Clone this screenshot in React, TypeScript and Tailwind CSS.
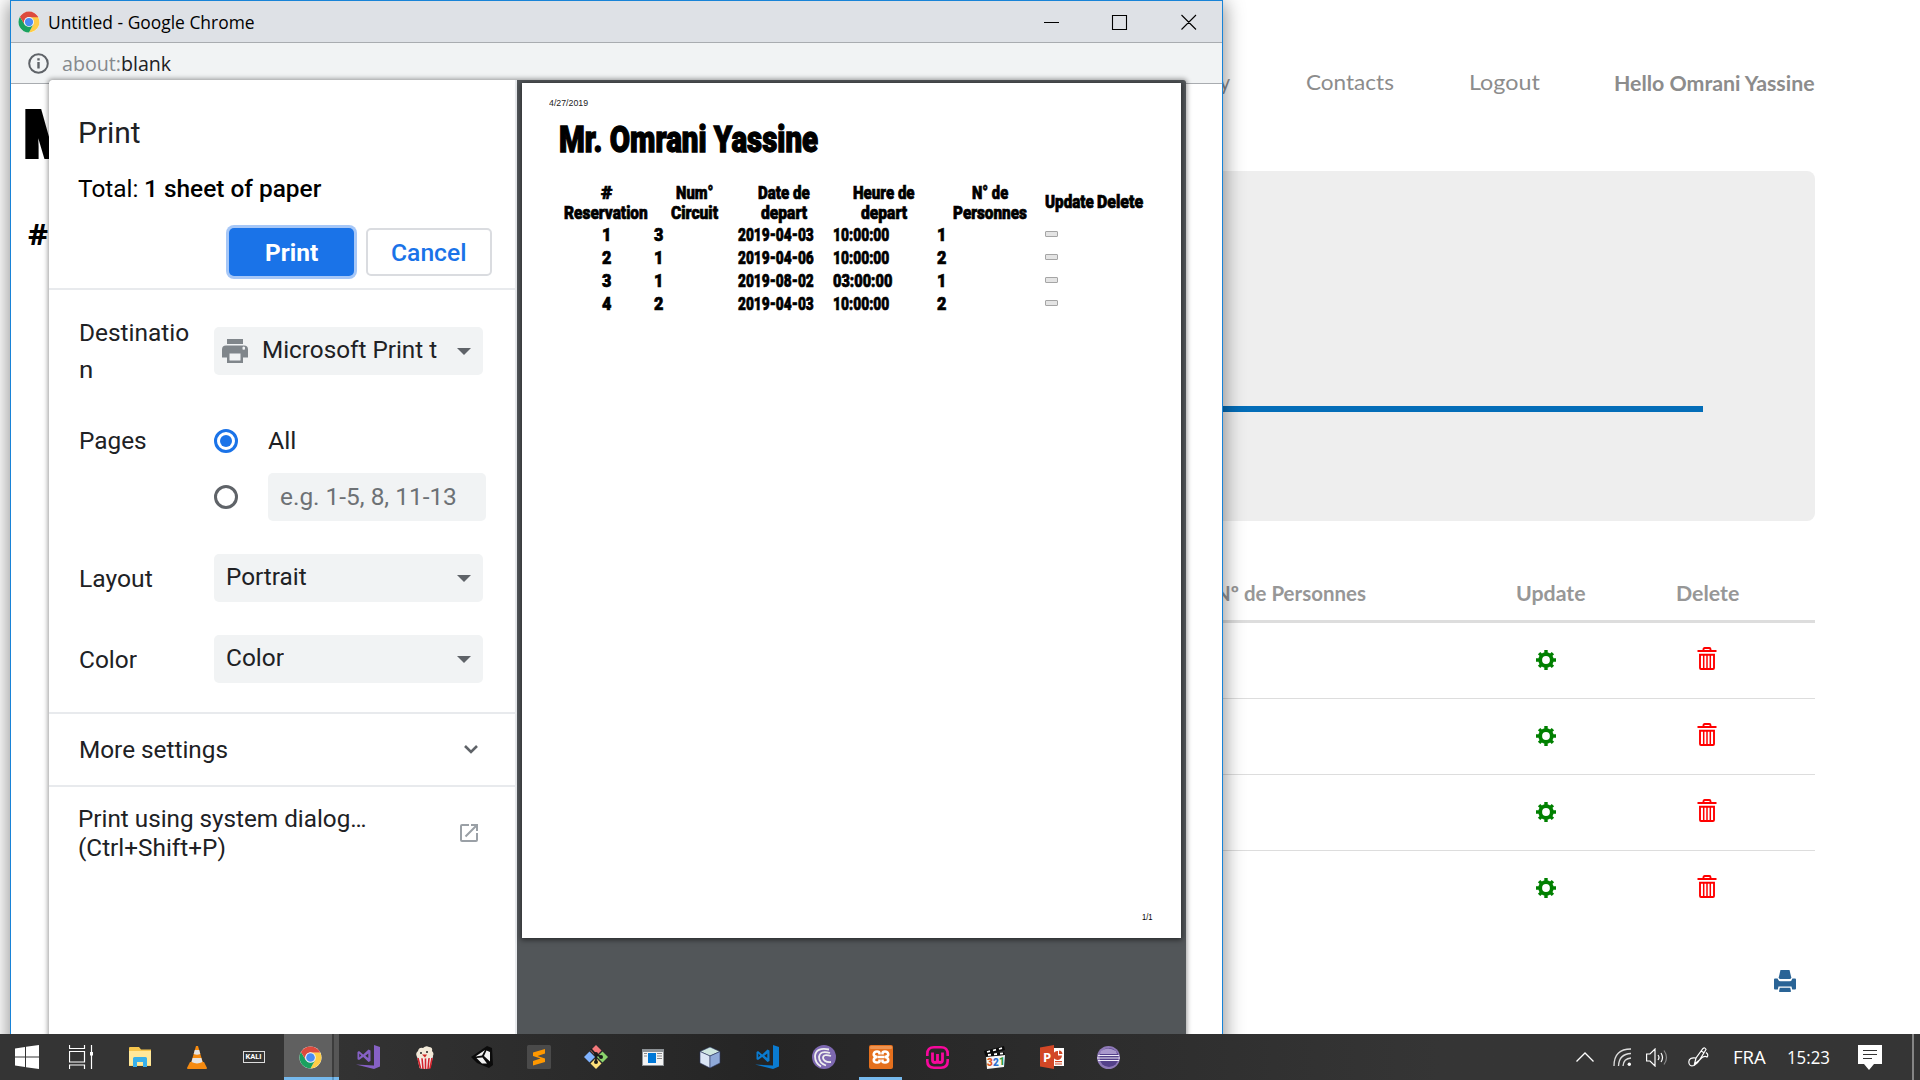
import { useLayoutEffect, useRef, type ReactNode } from "react";

const sans = "font-['Roboto',sans-serif]";
const segoe = "font-['Open_Sans',sans-serif]";
const heavy = "font-['Roboto',sans-serif] font-black";

/** A single line of text squeezed or stretched to a given width. */
function Fit({ w, className = "", children }: { w: number; className?: string; children: ReactNode }) {
  const ref = useRef<HTMLSpanElement>(null);
  useLayoutEffect(() => {
    const el = ref.current;
    if (el) el.style.transform = `scaleX(${w / el.offsetWidth})`;
  }, [w]);
  return (
    <span className={`block shrink-0 whitespace-nowrap ${className}`} style={{ width: w }}>
      <span ref={ref} className="inline-block origin-left align-top">
        {children}
      </span>
    </span>
  );
}

function ChromeIcon({ size }: { size: number }) {
  return (
    <svg width={size} height={size} viewBox="0 0 48 48">
      <circle cx="24" cy="24" r="23" fill="#fff" />
      <path d="M24 13H43.9A23 23 0 0 1 24 47L33.5 29.5 24 24Z" fill="#ffcd46" />
      <path d="M4.1 12.5A23 23 0 0 0 24 47L33.5 29.5 24 24 14.5 29.5Z" fill="#1aa15f" />
      <path d="M4.1 12.5A23 23 0 0 1 43.9 12.5V13.5H24A11 11 0 0 0 14.5 29.5Z" fill="#dd4b3e" />
      <circle cx="24" cy="24" r="11" fill="#f4f4f4" />
      <circle cx="24" cy="24" r="9" fill="#4a8cf5" />
    </svg>
  );
}

function Gear() {
  return (
    <svg width="20" height="20" viewBox="0 0 20 20" fill="none" stroke="green">
      <circle cx="10" cy="10" r="5.8" strokeWidth="3.8" />
      <path
        d="M10 0v3.4M10 16.6V20M0 10h3.4M16.6 10H20M3.1 3.1l2.3 2.3M14.6 14.6l2.3 2.3M3.1 16.9l2.3-2.3M14.6 5.4l2.3-2.3"
        strokeWidth="3.4"
      />
    </svg>
  );
}

function Trash() {
  return (
    <svg width="20" height="23" viewBox="0 0 20 23" fill="none" stroke="red">
      <path d="M0.5 4H19.5" strokeWidth="2" />
      <path d="M6.5 3.5V2.2Q6.5 1 7.7 1H12.3Q13.5 1 13.5 2.2V3.5" strokeWidth="1.9" />
      <path d="M3 7.7V21Q3 22 4 22H16Q17 22 17 21V7.7Z" strokeWidth="1.9" />
      <path d="M6.7 8V22M10 8V22M13.3 8V22" strokeWidth="1.5" />
    </svg>
  );
}

function NavBar() {
  return (
    <nav className="flex h-[171px] items-start justify-end pr-[105px] pt-[66px] font-['Lato',sans-serif] text-[21px] leading-[32px] text-[#8c8c8c]">
      <Fit w={62} className="mr-[76px]">Gallery</Fit>
      <Fit w={88} className="mr-[75px]">Contacts</Fit>
      <Fit w={71} className="mr-[74px]">Logout</Fit>
      <Fit w={201} className="pt-px font-bold">Hello Omrani Yassine</Fit>
    </nav>
  );
}

function SitePage() {
  return (
    <div className="ml-[600px] h-[1034px] bg-white">
      <NavBar />
      <div className="mr-[105px] h-[350px] rounded-lg bg-[#eee] pr-[112px] pt-[235px]">
        <div className="h-1.5 bg-[#036db8]" />
      </div>
      <div className="mr-[105px] font-['Lato',sans-serif] text-[21px] font-bold leading-[32px] text-[#979797]">
        <div className="flex h-[102px] justify-end border-b-[3px] border-[#ddd] pt-[56px]">
          <Fit w={151} className="mr-[150px]">Nº de Personnes</Fit>
          <Fit w={70} className="mr-[90px]">Update</Fit>
          <Fit w={63} className="mr-[76px]">Delete</Fit>
        </div>
        {[0, 1, 2, 3].map((i) => (
          <div key={i} className={`flex h-[76px] items-start justify-end ${i < 3 ? "border-b border-[#ddd]" : ""}`}>
            <div className="mr-[141px] pt-[27px]"><Gear /></div>
            <div className="mr-[98px] pt-[24px]"><Trash /></div>
          </div>
        ))}
      </div>
      <div className="flex justify-end pr-[124px] pt-[43px]">
        <svg width="22" height="22" viewBox="0 0 22 22" fill="#2a6496">
          <path d="M6.5 0H15.5L17.3 7.5Q17 9 15.7 9H6.3Q5 9 4.7 7.5Z" />
          <path d="M0 9.5Q0 8.5 1 8.5H3.6Q4.2 11.2 6.5 11.2H15.5Q17.8 11.2 18.4 8.5H21Q22 8.5 22 9.5V18.5Q22 19.5 21 19.5H18.2L17.5 16.5H4.5L3.8 19.5H1Q0 19.5 0 18.5Z" />
          <path d="M5.8 17.8H16.2L17 21.2Q17 22 16.2 22H5.8Q5 22 5 21.2Z" />
        </svg>
      </div>
    </div>
  );
}

function Select({ children, icon }: { children: ReactNode; icon?: ReactNode }) {
  return (
    <div className="flex h-12 w-[269px] items-center rounded-[5px] bg-[#f1f3f4] pl-[12px] pr-[12px]">
      {icon}
      <div className="-mt-0.5 flex-1">{children}</div>
      <svg width="14" height="7" viewBox="0 0 14 7"><path d="M0 0H14L7 7Z" fill="#5f6368" /></svg>
    </div>
  );
}

function PrintSettings() {
  return (
    <div className={`flex h-full w-[466px] flex-col bg-white text-[24px] leading-[30px] text-[#202124] ${sans}`}>
      <div className="h-[210px] border-b-2 border-[#e8eaed] pl-[29px] pt-[35px]">
        <Fit w={63} className="text-[29px] leading-[36px]">Print</Fit>
        <div className="mt-[23px] flex gap-[6px] text-black">
          <Fit w={60}>Total:</Fit>
          <Fit w={177} className="font-medium">1 sheet of paper</Fit>
        </div>
        <div className="mt-[24px] flex gap-[12px] pl-[151px] text-[#1a73e8]">
          <div className="flex h-12 w-[125px] items-center justify-center rounded-[5px] bg-[#1a73e8] text-white shadow-[0_0_0_3px_#a6c7f7]">
            <Fit w={53} className="mt-px font-bold">Print</Fit>
          </div>
          <div className="flex h-12 w-[126px] items-center justify-center rounded-[5px] border-2 border-[#dadce0] pr-[2px]">
            <Fit w={75} className="mt-px font-medium">Cancel</Fit>
          </div>
        </div>
      </div>

      <div className="grid h-[424px] grid-cols-[135px_1fr] content-start border-b-2 border-[#e8eaed] pl-[30px] pt-[24px]">
        <div className="pt-px leading-[37px]">
          <Fit w={110}>Destinatio</Fit>
          <Fit w={14}>n</Fit>
        </div>
        <div className="pt-[13px]">
          <Select
            icon={
              <svg className="-ml-1 mr-[14px]" width="26" height="24" viewBox="0 0 26 24" fill="#80868b">
                <path d="M5 0H21V5H5ZM4 6.5H22Q26 6.5 26 10.5V18.5H21V14H5V18.5H0V10.5Q0 6.5 4 6.5ZM20.5 9.2A1.3 1.3 0 1 0 23 9.2 1.3 1.3 0 1 0 20.5 9.2Z" fillRule="evenodd" />
                <path d="M5 13.5H21V24H5ZM7.5 14.5V21.5H18.5V14.5Z" fillRule="evenodd" />
              </svg>
            }
          >
            <Fit w={175}>Microsoft Print t</Fit>
          </Select>
        </div>

        <div className="pt-[37px]"><Fit w={68}>Pages</Fit></div>
        <div className="pt-[36px]">
          <div className="flex items-center">
            <span className="mr-[30px] flex size-6 items-center justify-center rounded-full border-[3px] border-[#1a73e8]">
              <span className="size-3 rounded-full bg-[#1a73e8]" />
            </span>
            <Fit w={28} className="mt-px">All</Fit>
          </div>
          <div className="mt-[17px] flex items-center">
            <span className="mr-[30px] size-6 rounded-full border-[3px] border-[#5f6368]" />
            <div className="flex h-12 w-[218px] items-center rounded-[5px] bg-[#f1f3f4] pl-[12px] text-[#6d7175]">
              <Fit w={177}>e.g. 1-5, 8, 11-13</Fit>
            </div>
          </div>
        </div>

        <div className="pt-[43px]"><Fit w={74}>Layout</Fit></div>
        <div className="pt-[33px]"><Select><Fit w={81}>Portrait</Fit></Select></div>
        <div className="pt-[43px]"><Fit w={58}>Color</Fit></div>
        <div className="pt-[33px]"><Select><Fit w={58}>Color</Fit></Select></div>
      </div>

      <div className="flex h-[73px] items-center justify-between border-b-2 border-[#e8eaed] pl-[30px] pr-[37px]">
        <Fit w={149}>More settings</Fit>
        <svg width="14" height="9" viewBox="0 0 14 9" fill="none" stroke="#5f6368" strokeWidth="2.6"><path d="M1 1 7 7 13 1" /></svg>
      </div>
      <div className="flex items-center justify-between pl-[29px] pr-[37px] pt-[18px]">
        <div className="leading-[29px]">
          <Fit w={289}>Print using system dialog…</Fit>
          <Fit w={148}>(Ctrl+Shift+P)</Fit>
        </div>
        <svg className="-mt-[3px]" width="18" height="18" viewBox="0 0 18 18" fill="none" stroke="#9aa0a6" strokeWidth="2">
          <path d="M9 1H2Q1 1 1 2V16Q1 17 2 17H16Q17 17 17 16V9M11 1H17V7M17 1 5.5 12.5" />
        </svg>
      </div>
    </div>
  );
}

const reservations = [
  { id: 1, circuit: 3, date: "2019-04-03", hour: "10:00:00", people: 1 },
  { id: 2, circuit: 1, date: "2019-04-06", hour: "10:00:00", people: 2 },
  { id: 3, circuit: 1, date: "2019-08-02", hour: "03:00:00", people: 1 },
  { id: 4, circuit: 2, date: "2019-04-03", hour: "10:00:00", people: 2 },
];

function HeadCell({ a, aw, b, bw }: { a: string; aw: number; b: string; bw: number }) {
  return (
    <div className="flex flex-col items-center pr-[3px]">
      <Fit w={aw}>{a}</Fit>
      <Fit w={bw}>{b}</Fit>
    </div>
  );
}

function PreviewPage() {
  return (
    <div className="flex h-[855px] w-[659px] flex-col bg-white pl-[27px] text-black shadow-[0_1px_5px_1px_rgba(0,0,0,0.5)]">
      <Fit w={39} className="mt-[14px] font-['Liberation_Sans',sans-serif] text-[9px] leading-[12px] text-[#222]">4/27/2019</Fit>
      <Fit w={259} className={`ml-[10px] mt-[8px] text-[36.5px] leading-[46px] [-webkit-text-stroke:1.3px_black] ${heavy}`}>Mr. Omrani Yassine</Fit>
      <div className={`ml-[13px] mt-[19px] text-[18px] [-webkit-text-stroke:0.7px_black] ${heavy}`}>
        <div className="grid h-[41px] grid-cols-[92px_84px_95px_104px_108px_52px_50px] pt-px leading-[20px]">
          <div className="flex flex-col items-center pr-[4px]"><Fit w={11}>#</Fit><Fit w={84}>Reservation</Fit></div>
          <HeadCell a="Num°" aw={37} b="Circuit" bw={47} />
          <HeadCell a="Date de" aw={52} b="depart" bw={46} />
          <HeadCell a="Heure de" aw={62} b="depart" bw={46} />
          <HeadCell a="N° de" aw={36} b="Personnes" bw={74} />
          <Fit w={49} className="pt-[9px]">Update</Fit>
          <Fit w={46} className="pt-[9px]">Delete</Fit>
        </div>
        {reservations.map((r) => (
          <div key={r.id} className="grid h-[23px] grid-cols-[92px_84px_95px_104px_108px_52px_50px] leading-[23px]">
            <div className="flex justify-center pr-[4px]"><Fit w={9}>{r.id}</Fit></div>
            <Fit w={9}>{r.circuit}</Fit>
            <Fit w={76}>{r.date}</Fit>
            <Fit w={r.hour[0] === "0" ? 59 : 56}>{r.hour}</Fit>
            <Fit w={9}>{r.people}</Fit>
            <div className="mt-[8px] h-[6px] w-[13px] rounded-[1px] border border-[#a5a5a5] bg-[#e4e4e4]" />
          </div>
        ))}
      </div>
      <Fit w={11} className="ml-auto mr-[28px] mt-auto mb-[15px] font-['Liberation_Sans',sans-serif] text-[9px] leading-[12px]">1/1</Fit>
    </div>
  );
}

function ChromeWindow() {
  return (
    <div className="absolute left-[10px] top-0 flex h-[1100px] w-[1213px] flex-col border border-[#1883d7] bg-white shadow-[0_4px_18px_2px_rgba(0,0,0,0.42)]">
      <div className={`flex h-[42px] items-center border-b border-[#a9acb0] bg-[#dee1e6] pl-[7px] pr-[25px] text-black ${segoe}`}>
        <ChromeIcon size={22} />
        <Fit w={207} className="ml-[8px] text-[18px] leading-[40px]">Untitled - Google Chrome</Fit>
        <svg className="ml-auto" width="154" height="16" viewBox="0 0 154 16" fill="none" stroke="#000" strokeWidth="1.1">
          <path d="M1 8.5H16M69.5 1.5H83.5V15.5H69.5ZM138.5 1 153 15.5M153 1 138.5 15.5" />
        </svg>
      </div>
      <div className={`flex h-[41px] shrink-0 items-center border-b border-[#a9acb0] bg-[#f1f3f4] pl-[17px] text-[20px] ${segoe}`}>
        <svg width="21" height="21" viewBox="0 0 21 21" fill="none" stroke="#5f6368" strokeWidth="2">
          <circle cx="10.5" cy="10.5" r="9.3" />
          <path d="M10.5 9V15.5M10.5 5.2V7.4" strokeWidth="2.4" />
        </svg>
        <Fit w={59} className="ml-[13px] pt-px text-[#85898d]">about:</Fit>
        <Fit w={50} className="pt-px text-[#202124]">blank</Fit>
      </div>
      <div className="text-black">
        <Fit w={50} className={`ml-[13px] mt-[11px] text-[65px] leading-[80px] [-webkit-text-stroke:4px_black] ${heavy}`}>M</Fit>
        <Fit w={20} className="ml-[17px] mt-[41px] font-['Open_Sans',sans-serif] text-[28px] font-bold leading-[36px]">#</Fit>
      </div>
      <div className="absolute left-[38px] top-[79px] flex h-[1020px] w-[1137px] overflow-hidden rounded-t-[3px] bg-[#525659] shadow-[0_0_5px_1px_rgba(0,0,0,0.4)]">
        <PrintSettings />
        <div className="w-[2px] bg-[#e8eaed]" />
        <div className="pl-[5px] pt-[3px]"><PreviewPage /></div>
      </div>
    </div>
  );
}

const VsShape = ({ color }: { color: string }) => (
  <svg width="24" height="24" viewBox="0 0 24 24" fill={color}>
    <path d="M18 0 24 2V21.5L18 24 0 19.5 18 20.5Z" />
    <path d="M1.5 7 3 6 7.2 9.5 12.5 4.5 14.5 5.5V16L12.5 17 7.2 12 3 15 1.5 14.3ZM3.3 8.5V12.5L5.3 10.5ZM9.3 10.7 12.3 13V8.5Z" fillRule="evenodd" />
  </svg>
);

const apps: { name: string; icon: ReactNode; state?: "active" | "open" }[] = [
  {
    name: "files",
    icon: (
      <svg width="22" height="20" viewBox="0 0 22 20">
        <path d="M0 1Q0 0 1 0H10L12 2.5H22V19H0Z" fill="#f7c64d" />
        <path d="M0 4H22V18.5H0Z" fill="#ffe89a" />
        <path d="M4 20V11.5Q4 10 5.5 10H16.5Q18 10 18 11.5V20H14V15H8V20Z" fill="#38b0ea" />
      </svg>
    ),
  },
  {
    name: "vlc",
    icon: (
      <svg width="20" height="23" viewBox="0 0 20 23">
        <path d="M3 16H17L20 22Q20 23 19 23H1Q0 23 0 22Z" fill="#f58a10" />
        <path d="M9 0H11L16 17Q10 21 4 17Z" fill="#f58a10" />
        <path d="M7.8 4H12.2L13.3 8Q10 9.5 6.7 8ZM5.6 12H14.4L15.5 16Q10 18.8 4.5 16Z" fill="#e4e4e4" />
      </svg>
    ),
  },
  {
    name: "kali",
    icon: (
      <span className="flex h-[12px] w-[22px] items-center justify-center border border-[#ddd] font-['Roboto',sans-serif] text-[7.5px] font-bold leading-none text-white">
        KALI
      </span>
    ),
  },
  { name: "chrome", icon: <ChromeIcon size={23} />, state: "active" },
  { name: "visual-studio", icon: <VsShape color="#8661c5" /> },
  {
    name: "popcorn",
    icon: (
      <svg width="18" height="23" viewBox="0 0 18 23">
        <path d="M1 10H17L14.5 22Q9 24 3.5 22Z" fill="#f3eeee" />
        <path d="M2 12 4.5 22.3M6 12 7 23M9.5 12V23M13 12 12 23M16 12 14 22.3" stroke="#d4222b" strokeWidth="1.6" />
        <path d="M1 11Q-1 7 2 5 3 1 7 2 10-1 13 1 17 1 16 5 19 8 16 11 9 14 1 11Z" fill="#f3ead9" />
        <circle cx="5" cy="7" r="1" fill="#222" /><circle cx="11" cy="6" r="1" fill="#222" />
        <path d="M6 8.5H11L9 11.5Z" fill="#c22" />
      </svg>
    ),
  },
  {
    name: "unity",
    icon: (
      <svg width="22" height="24" viewBox="0 0 22 24">
        <path d="M0 12 16 1 21 3 22 20 18 23 6 18Z" fill="#0b0b0b" />
        <path d="M4.5 11.5 14 5 11 10.5ZM15.5 5.5 19 7V16.5L13 11ZM5.5 13 11.5 12.5 16 18.5 11 18.5Z" fill="#f2f2f2" />
      </svg>
    ),
  },
  {
    name: "sublime",
    icon: (
      <svg width="24" height="24" viewBox="0 0 24 24">
        <rect width="24" height="24" rx="1.5" fill="#4a4a4a" />
        <path d="M18 4V8.5L10.5 11 18 13.5V17L6 20.5V16L13.5 13.5 6 11V7.5Z" fill="#ff9800" />
      </svg>
    ),
  },
  {
    name: "git",
    icon: (
      <svg width="24" height="24" viewBox="0 0 24 24">
        <path d="M12 0 17.5 5.5 12 11 6.5 5.5Z" fill="#f4797b" />
        <path d="M0 12 5.5 6.5 11 12 5.5 17.5Z" fill="#80b3ff" />
        <path d="M24 12 18.5 6.5 13 12 18.5 17.5Z" fill="#8bd36c" />
        <path d="M12 24 17.5 18.5 12 13 6.5 18.5Z" fill="#ffe07a" />
        <path d="M7 4 12 9.5V17M12.5 9.5 17 12" stroke="#1a1a1a" strokeWidth="1.8" fill="none" />
        <circle cx="12" cy="9" r="2" fill="#1a1a1a" /><circle cx="17" cy="12" r="2" fill="#1a1a1a" /><circle cx="12" cy="17" r="2" fill="#1a1a1a" />
      </svg>
    ),
  },
  {
    name: "terminal",
    icon: (
      <svg width="22" height="17" viewBox="0 0 22 17">
        <path d="M0 0H22V17H0Z" fill="#8d9296" /><path d="M1 3H21V16H1Z" fill="#f4f4f4" />
        <path d="M6 4H14V14H6Z" fill="#0078d7" />
        <path d="M2 4.5H5M2 7H5M15 4.5H20M15 7H20M15 9.5H20" stroke="#888" />
      </svg>
    ),
  },
  {
    name: "cube",
    icon: (
      <svg width="22" height="23" viewBox="0 0 22 23" stroke="#2b3560" strokeWidth=".6">
        <path d="M11 1 21 5.5 11 10 1 5.5Z" fill="#cfe7e0" />
        <path d="M1 5.5 11 10V22L1 17Z" fill="#dbe6f5" />
        <path d="M21 5.5 11 10V22L21 17Z" fill="#8fa9d8" />
      </svg>
    ),
  },
  { name: "vscode", icon: <VsShape color="#0a7bd0" /> },
  {
    name: "torrent",
    icon: (
      <svg width="24" height="24" viewBox="0 0 24 24" fill="none" stroke="#eee" strokeWidth="1.8">
        <circle cx="12" cy="12" r="12" fill="#7d68b0" stroke="none" />
        <path d="M17 4.5Q4 2 3 11 3 18 9 21.5M18 8Q8 5 7 12 7 18 14 20.5M19 11Q11 8.5 11 13 12 17.5 19 17" />
      </svg>
    ),
  },
  {
    name: "xampp",
    state: "open",
    icon: (
      <svg width="24" height="24" viewBox="0 0 24 24">
        <rect width="24" height="24" rx="2" fill="#e5701d" />
        <rect x="1" y="1" width="22" height="3" rx="1" fill="#ee9452" />
        <path d="M10.5 9.5V8.5Q10.5 6.500 8 6.500T4.800 8.800 8 12Q4.800 12.500 4.800 15T8 17.500 10.500 15.500V14.500M13.500 9.500V8.500Q13.500 6.500 16 6.500T19.200 8.800 16 12Q19.200 12.500 19.200 15T16 17.500 13.500 15.500V14.500M8.500 12H15.500" fill="none" stroke="#fff" strokeWidth="2.600" />
      </svg>
    ),
  },
  {
    name: "wamp",
    icon: (
      <svg width="23" height="23" viewBox="0 0 23 23" fill="none" stroke="#f7089c" strokeWidth="2.6">
        <path d="M1.3 10V8Q1.3 1.3 8 1.3H15Q21.7 1.3 21.7 8V10M1.3 13V15Q1.3 21.7 8 21.7H15Q21.7 21.7 21.7 15V13" />
        <path d="M6.5 6.5V14Q6.5 16.5 9 16.5T11.5 14V8V14Q11.5 16.5 14 16.5T16.5 14V6.5" strokeWidth="2.8" />
      </svg>
    ),
  },
  {
    name: "mpc",
    icon: (
      <svg width="22" height="23" viewBox="0 0 22 23">
        <path d="M2 10 21 9 20 21 3 23Z" fill="#f7f7f7" />
        <path d="M0 5 20 0 21 4 1 9Z" fill="#0a0a0a" /><path d="M1 8 20 6 21 9 2 11Z" fill="#0a0a0a" />
        <path d="M3 6 6 5.2M9 4.5 12 3.7M15 3 18 2.2M4 9 7 8.7M10 8.3 13 8M16 7.7 19 7.4" stroke="#fff" strokeWidth="1.8" />
        <g fontFamily="Roboto" fontWeight="900" fontSize="10"><text x="3" y="20" fill="#e0581c">3</text><text x="9" y="19.5" fill="#2b6fd0">2</text><text x="15" y="19" fill="#2a9a3c">1</text></g>
      </svg>
    ),
  },
  {
    name: "powerpoint",
    icon: (
      <svg width="24" height="24" viewBox="0 0 24 24">
        <path d="M13 3H24V21H13Z" fill="#fff" />
        <path d="M18 6A4.5 4.5 0 1 0 22 10.5H18Z" fill="#d24726" /><path d="M19 5.5A4 4 0 0 1 22.5 9H19ZM15 16H22V17.3H15ZM15 18.5H22V19.5H15Z" fill="#d24726" />
        <path d="M0 2.5 14 0V24L0 21.5Z" fill="#d24726" />
        <text x="3" y="16.5" fill="#fff" fontFamily="Open Sans" fontWeight="700" fontSize="13">P</text>
      </svg>
    ),
  },
  {
    name: "eclipse",
    icon: (
      <svg width="23" height="23" viewBox="0 0 23 23">
        <circle cx="11.5" cy="11.5" r="11.5" fill="#8f7ab8" />
        <circle cx="12" cy="11.5" r="9.5" fill="#54418a" />
        <path d="M4 5Q11 0 19 5L20 8H3Z" fill="#a998cc" />
        <path d="M1 9.5H22M0 12H23M1 14.5H22" stroke="#f0ecf8" strokeWidth="1.2" />
      </svg>
    ),
  },
];

function Taskbar() {
  return (
    <div className={`absolute left-0 top-[1034px] flex h-[46px] w-[1920px] items-stretch bg-linear-to-r from-[#343434] from-15% via-[#252525] via-40% to-[#353535] to-75% text-white ${segoe}`}>
      <div className="flex w-[54px] items-center justify-center">
        <svg width="24" height="24" viewBox="0 0 24 24" fill="#fff"><path d="M0 3.4 10 2V11.5H0ZM11 1.8 24 0V11.5H11ZM0 12.5H10V22L0 20.6ZM11 12.5H24V24L11 22.2Z" /></svg>
      </div>
      <div className="flex w-[57px] items-center pl-[15px]">
        <svg width="24" height="24" viewBox="0 0 24 24" fill="none" stroke="#fff" strokeWidth="1.2"><path d="M.5 0V3.5H15.5V0M.5 6.5H15.5V17H.5ZM.5 24V20H15.5V24M22.5 0V24" /><path d="M21 7H24V10.5H21Z" fill="#fff" stroke="none" /></svg>
      </div>
      {apps.map((a) =>
        a.state === "active" ? (
          <div key={a.name} className="flex w-[57px]">
            <div className="ml-[2px] flex w-[48px] items-center justify-center border-b-[3px] border-[#76b9ed] bg-[#606060] pl-[5px] pt-[3px]">{a.icon}</div>
            <div className="w-[2px] border-b-[3px] border-[#5d96c3] bg-[#3c3c3c]" />
            <div className="w-[5px] border-b-[3px] border-[#76b9ed] bg-[#565656]" />
          </div>
        ) : (
          <div key={a.name} className="flex w-[57px] flex-col items-center">
            <div className="flex h-[46px] items-center">{a.icon}</div>
            {a.state === "open" && <div className="-mt-[3px] h-[3px] w-[43px] bg-[#76b9ed]" />}
          </div>
        ),
      )}
      <div className="ml-auto flex items-center text-[18px] leading-[44px]">
        <svg className="mr-[19px]" width="18" height="10" viewBox="0 0 18 10" fill="none" stroke="#fff" strokeWidth="1.3"><path d="M.5 9.5 9 1 17.5 9.5" /></svg>
        <svg className="mr-[15px]" width="18" height="18" viewBox="0 0 18 18" fill="none" stroke="#ddd" strokeWidth="1.3">
          <path d="M1 18Q1 1 18 1M5.5 18Q6 6 18 5.5M10 18Q10.5 10.5 18 10" /><circle cx="16.3" cy="16.3" r="1.7" fill="#fff" stroke="none" />
        </svg>
        <svg className="mr-[20px]" width="22" height="19" viewBox="0 0 22 19" fill="none" stroke="#fff" strokeWidth="1.2">
          <path d="M.6 6H4L9 1V18L4 13H.6ZM12 7Q14 9.5 12 12M15 5Q18 9.5 15 14" /><path d="M18 2.5Q23 9.5 18 16.5" stroke="#888" />
        </svg>
        <svg className="mr-[24px]" width="21" height="20" viewBox="0 0 21 20" fill="none" stroke="#fff" strokeWidth="1.2">
          <path d="M6.5 17 8 11 15 1.5Q17 0 18 2.5L11.5 13ZM8 11Q1 10 .8 15 1 20 6 18.5 10 16 11.5 13 16 8 19 10 21 8 18 5.5M13 4 16.5 6" />
        </svg>
        <Fit w={33} className="mr-[21px]">FRA</Fit>
        <Fit w={43} className="mr-[28px]">15:23</Fit>
        <svg className="mr-[30px]" width="24" height="25" viewBox="0 0 24 25"><path d="M0 0H24V19H16L11 25 6 19H0Z" fill="#fff" /><path d="M5 5.5H19M5 9.5H19M5 13.5H14" stroke="#333" strokeWidth="1.2" /></svg>
        <div className="mr-[6px] h-[46px] w-[2px] bg-[#858585]" />
      </div>
    </div>
  );
}

export default function App() {
  return (
    <div className="relative h-[1080px] w-[1920px] overflow-hidden bg-white">
      <SitePage />
      <ChromeWindow />
      <Taskbar />
    </div>
  );
}
